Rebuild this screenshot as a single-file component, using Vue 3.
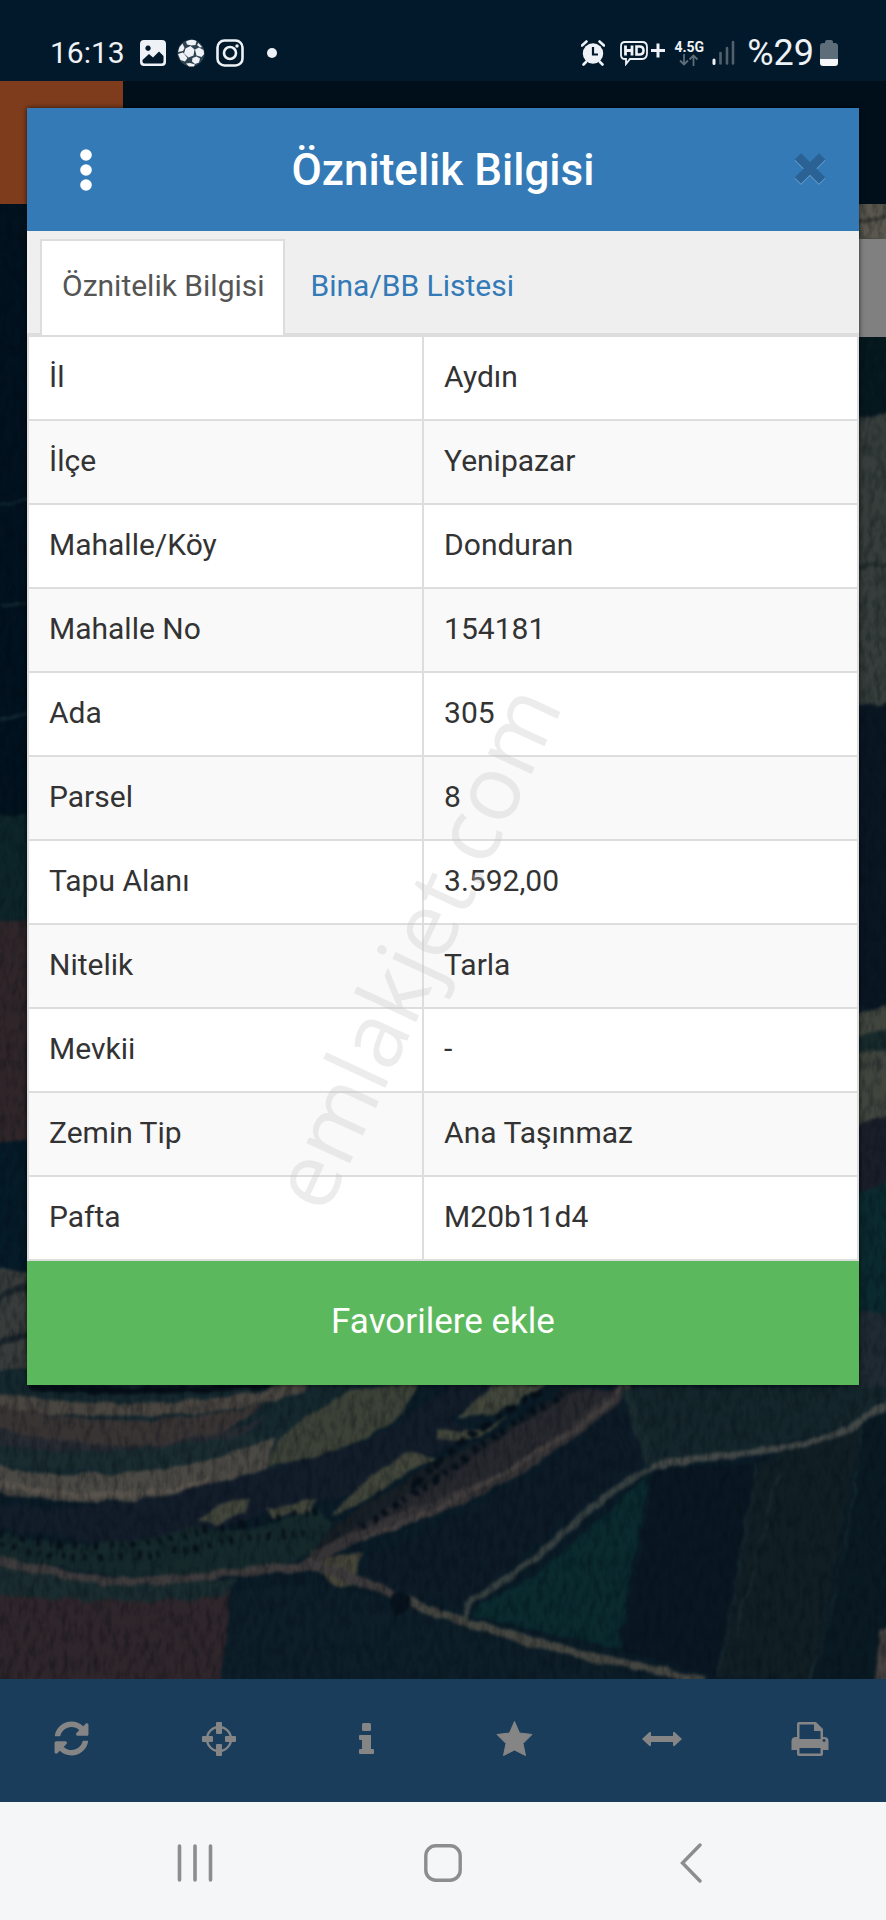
<script setup>
import { ref } from 'vue'

const rows = [
  ['İl', 'Aydın'],
  ['İlçe', 'Yenipazar'],
  ['Mahalle/Köy', 'Donduran'],
  ['Mahalle No', '154181'],
  ['Ada', '305'],
  ['Parsel', '8'],
  ['Tapu Alanı', '3.592,00'],
  ['Nitelik', 'Tarla'],
  ['Mevkii', '-'],
  ['Zemin Tip', 'Ana Taşınmaz'],
  ['Pafta', 'M20b11d4'],
]

const tabs = ['Öznitelik Bilgisi', 'Bina/BB Listesi']
const active = ref(0)
</script>

<template>
  <div class="screen">
    <header class="status">
      <div class="status-side">
        <span class="clock">16:13</span>
        <svg class="s-pic" width="26" height="26" viewBox="0 0 26 26" aria-hidden="true">
          <path fill="#eef2f6" fill-rule="evenodd" d="M4 0h18q4 0 4 4v18q0 4-4 4H4q-4 0-4-4V4q0-4 4-4zM8 5.500a2.700 2.700 0 1 0 .1 0zM2.500 20v1.500q0 2 2 2h17q2 0 2-2V16l-4.500-4.500-6 6-4-3.500z" />
        </svg>
        <svg class="s-ball" width="28" height="28" viewBox="0 0 28 28" aria-hidden="true">
          <circle cx="14" cy="14" r="13.500" fill="#2f4250" />
          <g fill="#eef2f6">
            <path d="M8.500 9.500l5-2.500 4 3.500-1 6-5 2-4.500-4z" />
            <path d="M9 2.500Q14-.5 19.500 2L18.500 6l-4 .5L10 5.500z" />
            <path d="M2.500 8l3-3.500 2 4.500L6 12 1 13z" />
            <path d="M1 15l5-1.500 4.500 5.500L8 22.500 3.500 21z" />
            <path d="M18 10.500l4-2 4.500 2.500.7 4-2.700 3-5-1.500z" />
            <path d="M21.500 4L25 8l-2 .5-3-2.500z" />
            <path d="M15.500 19l4-1.500 3.500 2-1 4-4 1.500-3-2.500z" />
            <path d="M9 24.500l4-.5 5 1.500-1 2h-5z" />
          </g>
        </svg>
        <svg class="s-insta" width="28" height="28" viewBox="0 0 28 28" aria-hidden="true">
          <g fill="none" stroke="#eef2f6" stroke-width="2.600">
            <rect x="1.500" y="1.500" width="25" height="25" rx="7" />
            <circle cx="14" cy="14" r="6" />
          </g>
          <circle cx="21" cy="7" r="1.700" fill="#eef2f6" />
        </svg>
        <span class="s-dot"></span>
      </div>
      <div class="status-side">
        <svg width="24" height="26" viewBox="0 0 24 26" aria-hidden="true">
          <circle cx="12" cy="13.500" r="10.200" fill="#eef2f6" />
          <path d="M1 5.500L5.500 1.500M23 5.500L18.500 1.500M5 22l-2.500 2.500M19 22l2.500 2.500" stroke="#eef2f6" stroke-width="2.600" stroke-linecap="round" />
          <path d="M12 7v7.500h5" fill="none" stroke="#01192a" stroke-width="2.200" />
        </svg>
        <svg class="s-hd" width="46" height="26" viewBox="0 0 46 26" aria-hidden="true">
          <path d="M5 2h17q5 0 5 5v6q0 6-5 6H10l-4 5v-5H5q-4 0-4-4V6q0-4 4-4z" fill="none" stroke="#eef2f6" stroke-width="1.800" />
          <path d="M5.500 5.500v10M12 5.500v10M5.500 10.500H12" stroke="#eef2f6" stroke-width="2.800" />
          <path d="M16.500 6.500h3q4 0 4 4t-4 4h-3z" fill="none" stroke="#eef2f6" stroke-width="2.600" />
          <path d="M31 10.500h14M38 3.500v14" stroke="#eef2f6" stroke-width="3" />
        </svg>
        <span class="net">
          <span class="net-label">4.5G</span>
          <svg width="20" height="12" viewBox="0 0 20 12" aria-hidden="true">
            <path d="M5 0v10.500M1 6.500l4 4 4-4M14.500 12V1.500M10.500 5.500l4-4 4 4" fill="none" stroke="#5d6d79" stroke-width="1.800" />
          </svg>
        </span>
        <svg class="s-signal" width="23" height="25" viewBox="0 0 23 25" aria-hidden="true">
          <path d="M2 20v3.500" stroke="#eef2f6" stroke-width="3" stroke-linecap="round" />
          <path d="M8.500 13v10.500M15 8v15.500M21 2v21.500" stroke="#50606d" stroke-width="2.600" stroke-linecap="round" />
        </svg>
        <span class="percent">%29</span>
        <svg class="s-bat" width="18" height="26" viewBox="0 0 18 26" aria-hidden="true">
          <path d="M5 2q0-2 2-2h4q2 0 2 2v1h2q3 0 3 3v13H0V6q0-3 3-3h2z" fill="#5d6d79" />
          <path d="M0 19h18v4q0 3-3 3H3q-3 0-3-3z" fill="#f4f6f8" />
        </svg>
      </div>
    </header>

    <main class="stage">
      <svg class="map" viewBox="0 0 886 1598" preserveAspectRatio="xMidYMid slice" aria-hidden="true">
        <defs>
          <filter id="rough" x="-5%" y="-5%" width="110%" height="110%" color-interpolation-filters="sRGB">
            <feTurbulence type="fractalNoise" baseFrequency="0.05" numOctaves="2" seed="4" result="n" />
            <feDisplacementMap in="SourceGraphic" in2="n" scale="9" xChannelSelector="R" yChannelSelector="G" />
            <feGaussianBlur stdDeviation="1.800" />
          </filter>
          <filter id="grain" x="0" y="0" width="100%" height="100%" color-interpolation-filters="sRGB">
            <feTurbulence type="fractalNoise" baseFrequency="0.16 0.07" numOctaves="3" seed="9" />
            <feColorMatrix values="0 0 0 0 0  0 0 0 0 0.030  0 0 0 0 0.060  1.800 0 0 0 -0.720" />
          </filter>
        </defs>
        <g transform="translate(0 -81)">
          <rect y="81" width="886" height="1600" fill="#0b1c27" />
          <g filter="url(#rough)">
            <path fill="#02121f" d="M-10 190H100V820H-10z" />
            <path fill="#0d2529" d="M-10 815H100V925H-10z" />
            <path fill="#30262a" d="M-10 923L60 918V1138L-10 1144z" />
            <path fill="#051b28" d="M-10 1144L60 1136V1270H-10z" />
            <path fill="#383c3b" d="M-10 1270H60V1400H-10z" />
            <path fill="none" stroke="#17303a" stroke-width="2" d="M0 503l40-4M0 606l40-4M0 720l40-8" />
            <path fill="none" stroke="#1b252b" stroke-width="7" d="M-5 1300q20-12 45-14M-5 1345l45-16" />
            <path fill="#5a584e" d="M840 195H900V242H840z" />
            <path fill="none" stroke="#34342f" stroke-width="3" d="M850 222l45-5" />
            <path fill="#06191f" d="M840 335H900V415H840z" />
            <path fill="#363d3b" d="M840 420L900 412V702L840 708z" />
            <path fill="none" stroke="#202a29" stroke-width="3" d="M850 568l40-4" />
            <path fill="#0a1723" d="M840 708L900 702V1008H840z" />
            <path fill="#40453e" d="M840 1020L900 1002V1140L840 1120z" />
            <path fill="none" stroke="#182a2c" stroke-width="20" d="M840 1050l60-16" />
            <path fill="#1a1e29" d="M840 1132L900 1110V1180L840 1205z" />
            <path fill="#0b2a2f" d="M840 1200L900 1175V1312H840z" />
            <path fill="#202a32" d="M840 1312H900V1400H840z" />
          </g>
          <g filter="url(#rough)">
            <g transform="translate(0 1370) scale(0.565 0.3333)">
              <path fill="#15282e" d="M-20 0H760L600 180 480 320 0 340z" />
              <path fill="#393434" d="M-20 90Q150 170 300 145Q420 125 480 95L400 180Q300 240 150 225Q60 210-20 190z" />
              <path fill="#272b32" d="M-20 165Q120 235 270 225Q380 200 470 140L400 230Q260 290 120 275L-20 235z" />
              <path fill="#1a2c30" d="M-20 225Q200 270 440 190L490 210 350 300 200 310-20 280z" />
              <path fill="#4b4944" d="M-20 275Q60 315 150 315Q340 310 490 200L470 300Q370 340 310 375Q220 400 130 395L-20 365z" />
              <path fill="#3d4238" d="M470 290L500 190 620 60 740 40 715 130 640 210 560 260z" />
              <path fill="#131d2a" d="M-20 400Q140 430 310 370Q500 290 640 220Q740 130 800 40H880Q830 110 790 150Q820 160 850 190L750 260Q700 290 640 360Q570 400 520 400Q410 470 300 500Q200 530 100 500L-20 470z" />
              <path fill="#42463b" d="M810 145L870 40H970Q930 90 880 130Q840 145 810 145zM770 180Q840 190 900 140L850 200Q800 220 770 205zM590 440Q640 330 710 255Q740 235 770 265Q700 330 650 390zM350 450Q400 390 440 385L430 430 380 465zM470 420L560 385 550 430 480 445z" />
              <path fill="#181f25" d="M1000 50L1100 60Q1010 190 930 270Q840 370 740 430L650 500 540 560 590 470 650 400 770 280 900 180z" />
              <path fill="#27282e" d="M1030 50L1090 60Q1000 200 920 280Q820 380 650 490L600 500 700 400 830 270z" />
              <path fill="#15292b" d="M-20 480L100 520Q280 520 330 470Q430 500 560 420L590 460 550 560Q350 630 200 615L-20 560z" />
              <g fill="none" stroke="#060f18" stroke-width="7">
                <path stroke-dasharray="3 9 2 6 5 12" vector-effect="non-scaling-stroke" d="M0 490Q180 560 320 500T560 430" />
                <path stroke-dasharray="2 7 4 13 3 8" vector-effect="non-scaling-stroke" d="M0 530Q180 590 320 540T550 490" />
                <path stroke-dasharray="4 9 6 5" vector-effect="non-scaling-stroke" d="M640 470Q760 350 820 270T1000 70" />
                <path stroke-dasharray="12 7 6 5" vector-effect="non-scaling-stroke" d="M730 350Q760 300 800 240T960 60" />
                <path vector-effect="non-scaling-stroke" d="M50 50Q250 80 480 40" />
              </g>
              <path fill="#0d1b27" d="M1110 60L1140 270 980 480 830 690 720 690 640 640 650 560Q820 450 960 290z" />
              <path fill="#14262b" d="M1110 50H1580L1530 150Q1400 230 1160 290z" />
              <path fill="#0a1722" d="M1160 300L1340 280 1270 920 1100 840z" />
              <path fill="#111f25" d="M1340 280L1530 160 1440 930 1270 920z" />
              <path fill="#0a1a23" d="M1530 170L1590 110V940H1440z" />
              <path fill="#0a2a2e" d="M1150 310L1095 835 840 740 850 700 960 600z" />
              <path fill="#2f262b" d="M-20 670Q200 690 410 660L390 940H-20z" />
              <path fill="#0d1e28" d="M420 660Q520 630 620 660L820 760 1100 880 1090 940H390z" />
              <path fill="#1a2c2f" d="M-20 580Q200 640 420 630L400 680Q200 710-20 670z" />
              <path fill="#46453a" d="M540 570L640 545 625 640 600 650z" />
              <g fill="none" stroke-linecap="round">
                <path stroke="#494540" stroke-width="13" vector-effect="non-scaling-stroke" d="M-20 85Q100 120 250 118Q430 110 530 50" />
                <path stroke="#5a544d" stroke-width="5" vector-effect="non-scaling-stroke" d="M0 340Q100 385 190 375Q310 370 370 330" />
                <path stroke="#353335" stroke-width="12" vector-effect="non-scaling-stroke" d="M1110 50Q1020 180 940 270T740 430T560 560" />
                <path stroke="#454040" stroke-width="5" vector-effect="non-scaling-stroke" d="M1100 60Q1020 180 900 300T650 500" />
                <path stroke="#3e3b3c" stroke-width="9" vector-effect="non-scaling-stroke" d="M0 575L90 605 180 630Q300 640 390 610L560 585 720 690" />
                <path stroke="#374040" stroke-width="7" vector-effect="non-scaling-stroke" d="M1150 290L1080 370Q1000 480 940 580L825 700 825 760" />
                <path stroke="#434847" stroke-width="7" vector-effect="non-scaling-stroke" d="M1150 290Q1280 250 1400 235L1500 180 1580 90" />
                <path stroke="#454641" stroke-width="9" vector-effect="non-scaling-stroke" d="M730 700L830 760Q1050 870 1240 930" />
                <path stroke="#1a2c30" stroke-width="8" vector-effect="non-scaling-stroke" d="M1110 70L1150 280" />
                <path stroke="#22363b" stroke-width="1" vector-effect="non-scaling-stroke" d="M1340 280L1270 920M1525 180Q1500 600 1435 930M1380 310L1300 800" />
              </g>
              <ellipse cx="707" cy="700" rx="20" ry="36" fill="#07121c" />
              <path fill="#46413f" d="M1560 780L1590 760V940H1545z" />
            </g>
          </g>
          <rect y="204" width="886" height="1476" filter="url(#grain)" opacity="0.4" />
        </g>
      </svg>
      <div class="appbar"><span class="appbar-logo"></span></div>
      <div class="side-box"></div>

      <section class="modal" role="dialog" aria-labelledby="modal-title">
        <header class="modal-head">
          <button class="icon-btn" type="button" aria-label="Menü">
            <svg width="12" height="42" viewBox="0 0 12 42"><g fill="#fff"><circle cx="6" cy="6" r="5.800" /><circle cx="6" cy="21" r="5.800" /><circle cx="6" cy="36" r="5.800" /></g></svg>
          </button>
          <h1 id="modal-title">Öznitelik Bilgisi</h1>
          <button class="icon-btn" type="button" aria-label="Kapat">
            <svg width="32" height="34" viewBox="0 0 32 34">
              <path d="M7 7.500L25 25.500M25 7.500L7 25.500" stroke="#6fa5d3" stroke-width="9" stroke-linecap="square" stroke-linejoin="round" />
              <path d="M7 6.500L25 24.500M25 6.500L7 24.500" stroke="#2a6295" stroke-width="9" stroke-linecap="square" stroke-linejoin="round" />
            </svg>
          </button>
        </header>
        <div class="tabs" role="tablist">
          <button
            v-for="(tab, i) in tabs"
            :key="tab"
            type="button"
            role="tab"
            class="tab"
            :class="{ active: active === i }"
            :aria-selected="active === i"
            @click="active = i"
          >{{ tab }}</button>
        </div>
        <table class="info">
          <tbody>
            <tr v-for="row in rows" :key="row[0]">
              <th scope="row">{{ row[0] }}</th>
              <td>{{ row[1] }}</td>
            </tr>
          </tbody>
        </table>
        <button class="favorite" type="button">Favorilere ekle</button>
      </section>
    </main>

    <nav class="toolbar" aria-label="Harita araçları">
      <button type="button" aria-label="Yenile">
        <svg width="35" height="35" viewBox="0 0 512 512"><path fill="currentColor" d="M370.720 133.280C339.458 104.008 298.888 87.962 255.848 88c-77.458.068-144.328 53.178-162.791 126.850-1.344 5.363-6.122 9.150-11.651 9.150H24.103c-7.498 0-13.194-6.807-11.807-14.176C33.933 94.924 134.813 8 256 8c66.448 0 126.791 26.136 171.315 68.685L463.030 40.970C478.149 25.851 504 36.559 504 57.941V192c0 13.255-10.745 24-24 24H345.941c-21.382 0-32.090-25.851-16.971-40.971l41.750-41.749zM32 296h134.059c21.382 0 32.090 25.851 16.971 40.971l-41.750 41.750c31.262 29.273 71.835 45.319 114.876 45.280 77.418-.070 144.315-53.144 162.787-126.849 1.344-5.363 6.122-9.150 11.651-9.150h57.304c7.498 0 13.194 6.807 11.807 14.176C478.067 417.076 377.187 504 256 504c-66.448 0-126.791-26.136-171.315-68.685L48.970 471.030C33.851 486.149 8 475.441 8 454.059V320c0-13.255 10.745-24 24-24z" /></svg>
      </button>
      <button type="button" aria-label="Konum">
        <svg width="34" height="36" viewBox="0 0 34 36">
          <circle cx="17" cy="18" r="12" fill="none" stroke="currentColor" stroke-width="2.400" />
          <g fill="currentColor"><rect x="14" y="1" width="6" height="12" rx="1" /><rect x="14" y="23" width="6" height="12" rx="1" /><rect x="0" y="15" width="11" height="6" rx="1" /><rect x="23" y="15" width="11" height="6" rx="1" /></g>
        </svg>
      </button>
      <button type="button" aria-label="Bilgi">
        <svg width="15" height="34" viewBox="0 0 15 34"><g fill="currentColor"><rect x="3" y="1" width="9" height="8" rx="1.500" /><path d="M1 13h11v14h2q1 0 1 1v3q0 1-1 1H1q-1 0-1-1v-3q0-1 1-1h2v-9H1q-1 0-1-1v-3q0-1 1-1z" /></g></svg>
      </button>
      <button type="button" aria-label="Favoriler">
        <svg width="37" height="38" viewBox="0 0 37 38"><path fill="currentColor" stroke="currentColor" stroke-width="1" stroke-linejoin="round" d="M18.500 1.500L23.500 13 36 14.500 27 23.500 29.500 35.500 18.500 30 7.500 35.500 10 23.500 1 14.500 13.500 13z" /></svg>
      </button>
      <button type="button" aria-label="Ölçüm">
        <svg width="40" height="16" viewBox="0 0 40 16"><path fill="currentColor" d="M0 8L7.500 1Q9 .500 9 2v3h22V2q0-1.500 1.500-1L40 8l-7.500 7Q31 15.500 31 14v-3H9v3q0 1.500-1.500 1z" /></svg>
      </button>
      <button type="button" aria-label="Yazdır">
        <svg width="38" height="36" viewBox="0 0 38 36"><path fill="currentColor" fill-rule="evenodd" d="M8 1h17l7 7v8h1q4.500 0 4.500 4v9h-5.500v4q0 2-2 2H8q-2 0-2-2v-4H.500v-9q0-4 4.500-4h1V3q0-2 2-2zm.500 2.500V18h21V10H23V3.500zm0 23.500v5.500h21V27zM33 18a1.500 1.500 0 1 0 .1 0z" /></svg>
      </button>
    </nav>

    <nav class="sysnav" aria-label="Sistem">
      <button type="button" aria-label="Son uygulamalar">
        <svg width="36" height="38" viewBox="0 0 36 38"><path d="M2.500 2v34M18 2v34M33.500 2v34" stroke="currentColor" stroke-width="3.600" stroke-linecap="round" /></svg>
      </button>
      <button type="button" aria-label="Ana ekran">
        <svg width="38" height="38" viewBox="0 0 38 38"><rect x="1.800" y="1.800" width="34.400" height="34.400" rx="10" fill="none" stroke="currentColor" stroke-width="3.400" /></svg>
      </button>
      <button type="button" aria-label="Geri">
        <svg width="22" height="40" viewBox="0 0 22 40"><path d="M20 2L2.500 20 20 38" fill="none" stroke="currentColor" stroke-width="3.400" stroke-linecap="round" /></svg>
      </button>
    </nav>

    <div class="watermark" aria-hidden="true"><span>emlakjet.com</span></div>
  </div>
</template>

<style>
body {
  margin: 0;
  background: #01192a;
}
</style>

<style scoped>
.screen {
  position: relative;
  display: flex;
  flex-direction: column;
  min-height: 100vh;
  overflow: hidden;
  font-family: Roboto, "Noto Sans", sans-serif;
  color: #333;
}
button {
  margin: 0;
  padding: 0;
  border: 0;
  background: none;
  color: inherit;
  font: inherit;
  cursor: pointer;
}
svg {
  display: block;
}

.status {
  display: flex;
  justify-content: space-between;
  align-items: center;
  height: 81px;
  padding: 24px 48px 0 50px;
  box-sizing: border-box;
  background: #01192a;
  color: #eef2f6;
}
.status-side {
  display: flex;
  align-items: center;
}
.clock {
  font-size: 30px;
  line-height: 36px;
  margin-right: 15px;
}
.s-ball,
.s-insta {
  margin-left: 11px;
}
.s-dot {
  width: 10px;
  height: 10px;
  margin-left: 23px;
  border-radius: 50%;
  background: #eef2f6;
}
.s-hd {
  margin-left: 15px;
}
.net {
  display: flex;
  flex-direction: column;
  align-items: center;
  margin-left: 8px;
}
.net-label {
  font-size: 14px;
  line-height: 14px;
  font-weight: 700;
}
.s-signal {
  margin-left: 8px;
}
.percent {
  margin-left: 12px;
  font-size: 36px;
  line-height: 36px;
}
.s-bat {
  margin-left: 6px;
}

.stage {
  position: relative;
  flex: 1;
  padding: 27px;
  background: #0b1c27;
}
.map {
  position: absolute;
  inset: 0;
  width: 100%;
  height: 100%;
}
.appbar {
  position: absolute;
  inset: 0 0 auto 0;
  height: 123px;
  background: #010f1b;
}
.appbar-logo {
  display: block;
  width: 123px;
  height: 123px;
  background: #7f3c1c;
}
.side-box {
  position: absolute;
  top: 158px;
  right: 0;
  width: 60px;
  height: 98px;
  background: #808080;
}

.modal {
  position: relative;
  background: #fff;
  box-shadow: 0 0 5px rgba(0, 0, 0, 0.7);
}
.modal-head {
  display: grid;
  grid-template-columns: 98px 1fr 98px;
  align-items: center;
  height: 123px;
  background: #337ab7;
}
.modal-head h1 {
  margin: 0;
  color: #fff;
  font-size: 44px;
  line-height: 48px;
  font-weight: 500;
  text-align: center;
}
.icon-btn {
  display: flex;
  align-items: center;
  justify-content: center;
  width: 98px;
  height: 98px;
  padding-left: 20px;
}
.icon-btn:last-child {
  padding: 0;
}

.tabs {
  display: flex;
  height: 104px;
  box-sizing: border-box;
  padding: 8px 13px 0;
  border-bottom: 2px solid #ddd;
  background: #efefef;
}
.tab {
  height: 96px;
  padding: 0 18px 4px 20px;
  border: 2px solid transparent;
  border-bottom: 0;
  color: #337ab7;
  font-size: 30px;
  line-height: 36px;
}
.tab + .tab {
  margin-left: 4px;
}
.tab.active {
  border-color: #ddd;
  background: #fff;
  color: #555;
}

.info {
  width: 100%;
  border-collapse: collapse;
  table-layout: fixed;
  font-size: 30px;
  line-height: 36px;
}
.info th,
.info td {
  box-sizing: border-box;
  height: 84px;
  padding: 0 20px 2px;
  border: 2px solid #ddd;
  font-weight: 400;
  text-align: left;
}
.info th {
  width: 47.6%;
}
.info tr:nth-child(even) {
  background: #f9f9f9;
}

.favorite {
  display: block;
  width: 100%;
  height: 124px;
  padding-bottom: 2px;
  background: #5cb85c;
  color: #fff;
  font-size: 35px;
  line-height: 40px;
}

.toolbar {
  display: grid;
  grid-template-columns: repeat(6, 1fr);
  height: 123px;
  background: #1a3d5c;
  color: #858585;
}
.toolbar button,
.sysnav button {
  display: flex;
  align-items: center;
  justify-content: center;
}
.toolbar button {
  padding: 0 5px 4px 0;
}
.sysnav {
  display: grid;
  grid-template-columns: repeat(3, 1fr);
  height: 118px;
  padding: 3px 71px 0;
  box-sizing: border-box;
  background: #f5f6f8;
  color: #8d8d8f;
}

.watermark {
  position: absolute;
  inset: 0 60px 28px 0;
  display: flex;
  align-items: center;
  justify-content: center;
  pointer-events: none;
}
.watermark span {
  color: rgba(200, 200, 200, 0.34);
  font-family: "Open Sans", "Noto Sans", sans-serif;
  font-size: 90px;
  line-height: 90px;
  white-space: nowrap;
  transform: rotate(-65deg);
}
</style>
